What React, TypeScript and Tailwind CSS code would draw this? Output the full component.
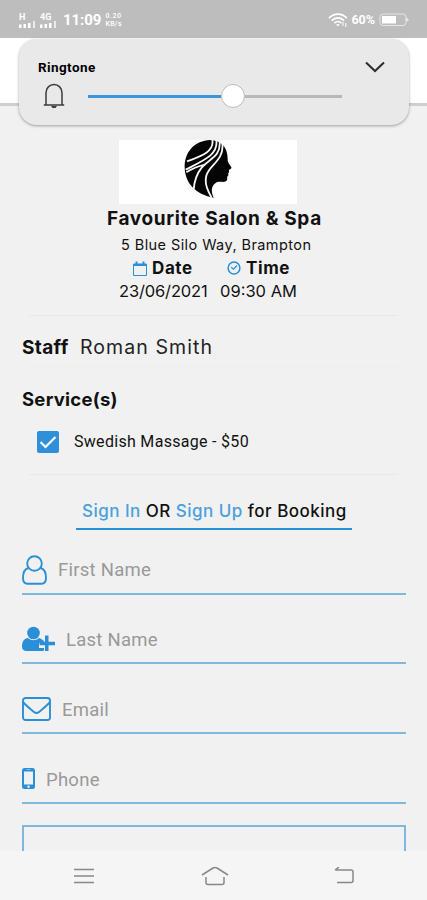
import React from "react";

const BLUE = "#2a8fd6";

function Signal({ label }: { label: string }) {
  return (
    <div className="flex w-[17px] flex-col">
      <span className="h-[8px] text-[9px] leading-[8px] font-bold">{label}</span>
      <svg width="17" height="7" viewBox="0 0 17 7" fill="#fff">
        <path d="M0 3.500h2.500V7H0zM4.500 3h2.500v4h-2.500zM9 2h2.500v5H9z" />
        <path d="M14 0h2v7h-2z" opacity=".7" />
      </svg>
    </div>
  );
}

function StatusBar() {
  return (
    <div className="flex h-[38px] shrink-0 items-center bg-[#bdbdbd] pt-[2px] pl-[19px] pr-[18px] text-white">
      <Signal label="H" />
      <div className="w-[4px]" />
      <Signal label="4G" />
      <span className="ml-[6px] text-[15px] leading-none font-bold tracking-[-0.05px] whitespace-nowrap">11:09</span>
      <div className="ml-[4px] w-[18px] text-[7px] leading-[8.500px] font-medium whitespace-nowrap">
        <div className="tracking-[0.6px]">0.20</div>
        <div className="tracking-[0.3px]">KB/s</div>
      </div>
      <div className="flex-1" />
      <svg width="20" height="15" viewBox="0 0 20 15" fill="none" stroke="#fff" strokeWidth="1.700">
        <path d="M1 5.200C6-.2 13.800-.2 18.800 5.200M3.700 7.700c3.600-3.800 8.800-3.800 12.400 0M6.400 10.200c2.100-2.100 4.900-2.100 7 0" />
        <path d="M8 11.300h3.800L9.900 13.500z" fill="#fff" stroke="none" />
        <path d="M15 9v4M17.800 10v4" strokeWidth="1" />
      </svg>
      <span className="ml-[3px] text-[12.500px] leading-none font-bold">60%</span>
      <svg className="ml-[4px]" width="30" height="14" viewBox="0 0 30 14">
        <rect x="1" y="1" width="26" height="11.500" rx="3" fill="none" stroke="#e4e4e4" strokeWidth="1" />
        <rect x="3" y="3" width="14" height="7.500" fill="#fff" />
        <path d="M27 4l3 2.800-3 2.800" fill="#e6e6e6" />
      </svg>
    </div>
  );
}

function VolumePanel() {
  return (
    <div className="absolute top-[39px] left-[19px] h-[86px] w-[390px] rounded-[18px] bg-[#e9e9e9] px-[19px] pt-[21px] shadow-[0_1px_3px_rgba(0,0,0,0.35)]">
      <div className="flex h-[16px] items-center justify-between">
        <span className="text-[13.500px] leading-none font-bold tracking-[0.4px] text-black">Ringtone</span>
        <svg className="mr-[5px] -mt-[2px]" width="20" height="12" viewBox="0 0 20 12" fill="none" stroke="#2d2d2d" strokeWidth="2">
          <path d="M1 1.500l9 8.500 9-8.500" />
        </svg>
      </div>
      <div className="mt-[7px] flex h-[26px] items-center">
        <svg className="ml-[5px]" width="22" height="26" viewBox="0 0 22 26" fill="none" stroke="#3c3c3c" strokeWidth="1.500">
          <path d="M3 21.500V10C3 5 6.500 1.500 11 1.500S19 5 19 10v11.500M.8 22h20.400" />
          <path d="M8 23h6l-1.500 2h-3z" fill="#3c3c3c" stroke="none" />
        </svg>
        <div className="ml-[23px] h-[3px] w-[133px] bg-[#3d94d8]" />
        <div className="size-[24px] rounded-full border border-[#bbb] bg-white" />
        <div className="h-[3px] w-[97px] bg-[#b8b8b8]" />
      </div>
    </div>
  );
}

function Logo() {
  return (
    <div className="ml-[119px] h-[64px] w-[178px] bg-white pl-[65px]">
      <svg width="50" height="60" viewBox="27 15 150 180">
        <path
          d="M105 15C60 17 28 50 29 98c2 48 34 80 87 90-8-18-8-34 6-44 10-8 28 2 34-8 2-5-1-9 2-13 4-2 2-5 1-7 5-3 2-6 3-10 1-4 9-4 7-9-5-9-12-15-11-25C158 38 140 16 105 15z"
          fill="#050505"
        />
        <path
          d="M112 15c6 32-26 46-76 64M124 16c6 42-34 58-92 88M34 112c22-14 40-20 58-24M134 18c4 48-30 52-54 80-16 20-22 38-24 66M142 26c6 50-40 64-48 96-6 24 4 44 16 66"
          fill="none"
          stroke="#f7f7f7"
          strokeWidth="5.500"
        />
      </svg>
    </div>
  );
}

function CalendarIcon() {
  return (
    <svg className="-mt-[2px]" width="14" height="15" viewBox="0 0 14 15" fill="none" stroke={BLUE} strokeWidth="1">
      <path d="M.5 3h13v11.500H.5z" />
      <path d="M.5 4h13" strokeWidth="2" />
      <path d="M3.500.5v3.500M10.500.5v3.500" strokeWidth="2" />
    </svg>
  );
}

function ClockIcon() {
  return (
    <svg className="-mt-[2px]" width="14" height="14" viewBox="0 0 14 14" fill="none" stroke={BLUE}>
      <circle cx="7" cy="7" r="5.900" strokeWidth="1.500" />
      <path d="M4.200 6.200L6.500 8.200 10 4.500" strokeWidth="1.200" />
    </svg>
  );
}

function UserIcon() {
  return (
    <svg width="25" height="30" viewBox="0 0 25 30" fill="none" stroke={BLUE} strokeWidth="1.900">
      <circle cx="12.500" cy="8.500" r="7.300" />
      <path d="M6.500 13C2.500 14 1 18.500 1 23c0 3.500 1.800 5.700 4.500 5.700h14c2.700 0 4.500-2.200 4.500-5.700 0-4.500-1.500-9-5.500-10" />
    </svg>
  );
}

function UserPlusIcon() {
  return (
    <svg width="33" height="26" viewBox="0 0 33 26" fill={BLUE}>
      <circle cx="11.500" cy="7" r="6.300" />
      <path d="M6 12c3.500 3 7.500 3 11 0 2 .4 3 1.300 4 2.500h1V17h-5v5h5v2.500c-1 .4-2 .5-3 .5H4.500C1.700 25 0 23.400 0 20.500 0 16.500 1.500 12.400 6 12z" />
      <path d="M23 9.500h3.500v6.200H33v3.500h-6.500v5.900H23v-5.900h-5.500v-3.500H23z" />
    </svg>
  );
}

function MailIcon() {
  return (
    <svg width="29" height="24" viewBox="0 0 29 24" fill="none" stroke={BLUE} strokeWidth="1.900">
      <rect x="1" y="1" width="27" height="22" rx="2.500" />
      <path d="M1 5c3.500 4 7.500 7 11 10 1.700 1.400 3.300 1.400 5 0 3.500-3 7.500-6 11-10" />
    </svg>
  );
}

function PhoneIcon() {
  return (
    <svg width="13" height="21" viewBox="0 0 13 21">
      <rect width="13" height="21" rx="2.500" fill={BLUE} />
      <path d="M2 3.500h9v13H2z" fill="#f1f1f1" />
      <path d="M4.500 1.500h4" stroke="#9ccbee" strokeWidth=".8" />
      <circle cx="6.500" cy="18.700" r="1.200" fill="#f1f1f1" />
    </svg>
  );
}

function Field({ icon, label, gap }: { icon: React.ReactNode; label: string; gap: string }) {
  return (
    <div className="mr-[21px] ml-[22px] flex h-[69.700px] items-end border-b-2 border-[#7fb7de]">
      <div className="flex h-[46px] items-center">
        {icon}
        <span className={gap + " pt-[2px] text-[18.500px] leading-none tracking-[0.25px] text-[#999]"}>{label}</span>
      </div>
    </div>
  );
}

export default function App() {
  return (
    <div className="relative flex h-[900px] w-[427px] flex-col overflow-hidden bg-[#f1f1f1] font-[Roboto,sans-serif]">
      <StatusBar />
      <div className="h-[68px] shrink-0 border-b-[3px] border-[#cfcfcf] bg-white" />
      <VolumePanel />

      <div className="h-[745px] shrink-0 overflow-hidden pt-[34px] font-[Inter,sans-serif] text-[#111]">
        <Logo />
        <div className="mt-[2px] flex h-[26px] items-center pl-[107px] text-[19px] font-bold tracking-[0.65px] whitespace-nowrap">Favourite Salon &amp; Spa</div>
        <div className="flex h-[26px] items-center pl-[121px] text-[14.500px] tracking-[0.42px] whitespace-nowrap">5 Blue Silo Way, Brampton</div>
        <div className="flex h-[22px] items-center pl-[133px] text-[17px] font-bold tracking-[0.6px]">
          <CalendarIcon />
          <span className="ml-[5px] w-[75px]">Date</span>
          <ClockIcon />
          <span className="ml-[5px]">Time</span>
        </div>
        <div className="flex h-[23px] items-center pl-[119px] text-[16.500px] whitespace-nowrap">
          <span className="w-[101px] tracking-[-0.15px]">23/06/2021</span>
          <span>09:30 AM</span>
        </div>
        <div className="mx-[29px] mt-[12px] h-px bg-[#e9e9e9]" />

        <div className="mt-[16px] flex h-[32px] items-center pl-[22px] whitespace-nowrap">
          <span className="w-[58px] text-[19px] font-bold tracking-[0.35px]">Staff</span>
          <span className="text-[19.500px] tracking-[1.080px] text-[#222]">Roman Smith</span>
        </div>
        <div className="mx-[29px] mt-[2px] h-px bg-[#ededed]" />
        <div className="mt-[20px] flex h-[26px] items-center pl-[22px] text-[18.500px] font-bold tracking-[0.25px]">Service(s)</div>
        <div className="mt-[17px] flex h-[24px] items-center pl-[37px] font-[Roboto,sans-serif]">
          <div className="flex size-[22px] items-center justify-center rounded-[2px] bg-[#2e90d8]">
            <svg width="18" height="14" viewBox="0 0 18 14" fill="none" stroke="#fff" strokeWidth="2.200">
              <path d="M1.500 7l5 5L16.500 2" />
            </svg>
          </div>
          <span className="ml-[15px] text-[16px] tracking-[0.3px] whitespace-nowrap">Swedish Massage - $50</span>
        </div>
        <div className="mx-[29px] mt-[20px] h-px bg-[#e9e9e9]" />

        <div className="mt-[21px] ml-[76px] flex h-[34px] w-[276px] items-center border-b-2 border-[#2792d2] pl-[6px] text-[17px] font-medium tracking-[0.48px] whitespace-pre">
          <span className="text-[#4a9fdc]">Sign In</span>
          <span> OR </span>
          <span className="text-[#4a9fdc]">Sign Up</span>
          <span> for Booking</span>
        </div>

        <div className="-mt-[5px] font-[Roboto,sans-serif]">
          <Field icon={<UserIcon />} label="First Name" gap="ml-[11px]" />
          <Field icon={<UserPlusIcon />} label="Last Name" gap="ml-[11px]" />
          <Field icon={<MailIcon />} label="Email" gap="ml-[11px]" />
          <Field icon={<PhoneIcon />} label="Phone" gap="ml-[11px]" />
        </div>
        <div className="mt-[21px] mr-[21px] ml-[22px] h-[60px] border-2 border-[#7fb7de]" />
      </div>

      <div className="z-10 flex h-[49px] shrink-0 items-center bg-[#f5f5f5] pl-[74px]">
        <svg width="20" height="16" viewBox="0 0 20 16" stroke="#888" strokeWidth="1.600">
          <path d="M0 1.500h20M0 8h20M0 14.500h20" />
        </svg>
        <svg className="ml-[107px]" width="28" height="20" viewBox="0 0 28 20" fill="none" stroke="#888" strokeWidth="1.500">
          <path d="M1 9L12 2q2-1 4 0l11 7" />
          <path d="M5 11v5.500q0 2 2 2h14q2 0 2-2V11" />
        </svg>
        <svg className="ml-[105px]" width="21" height="17" viewBox="0 0 21 17" fill="none" stroke="#888" strokeWidth="1.500">
          <path d="M2 3h15q2 0 2 2v8.500q0 2-2 2H3M5 0L1 3.200" />
        </svg>
      </div>
    </div>
  );
}
